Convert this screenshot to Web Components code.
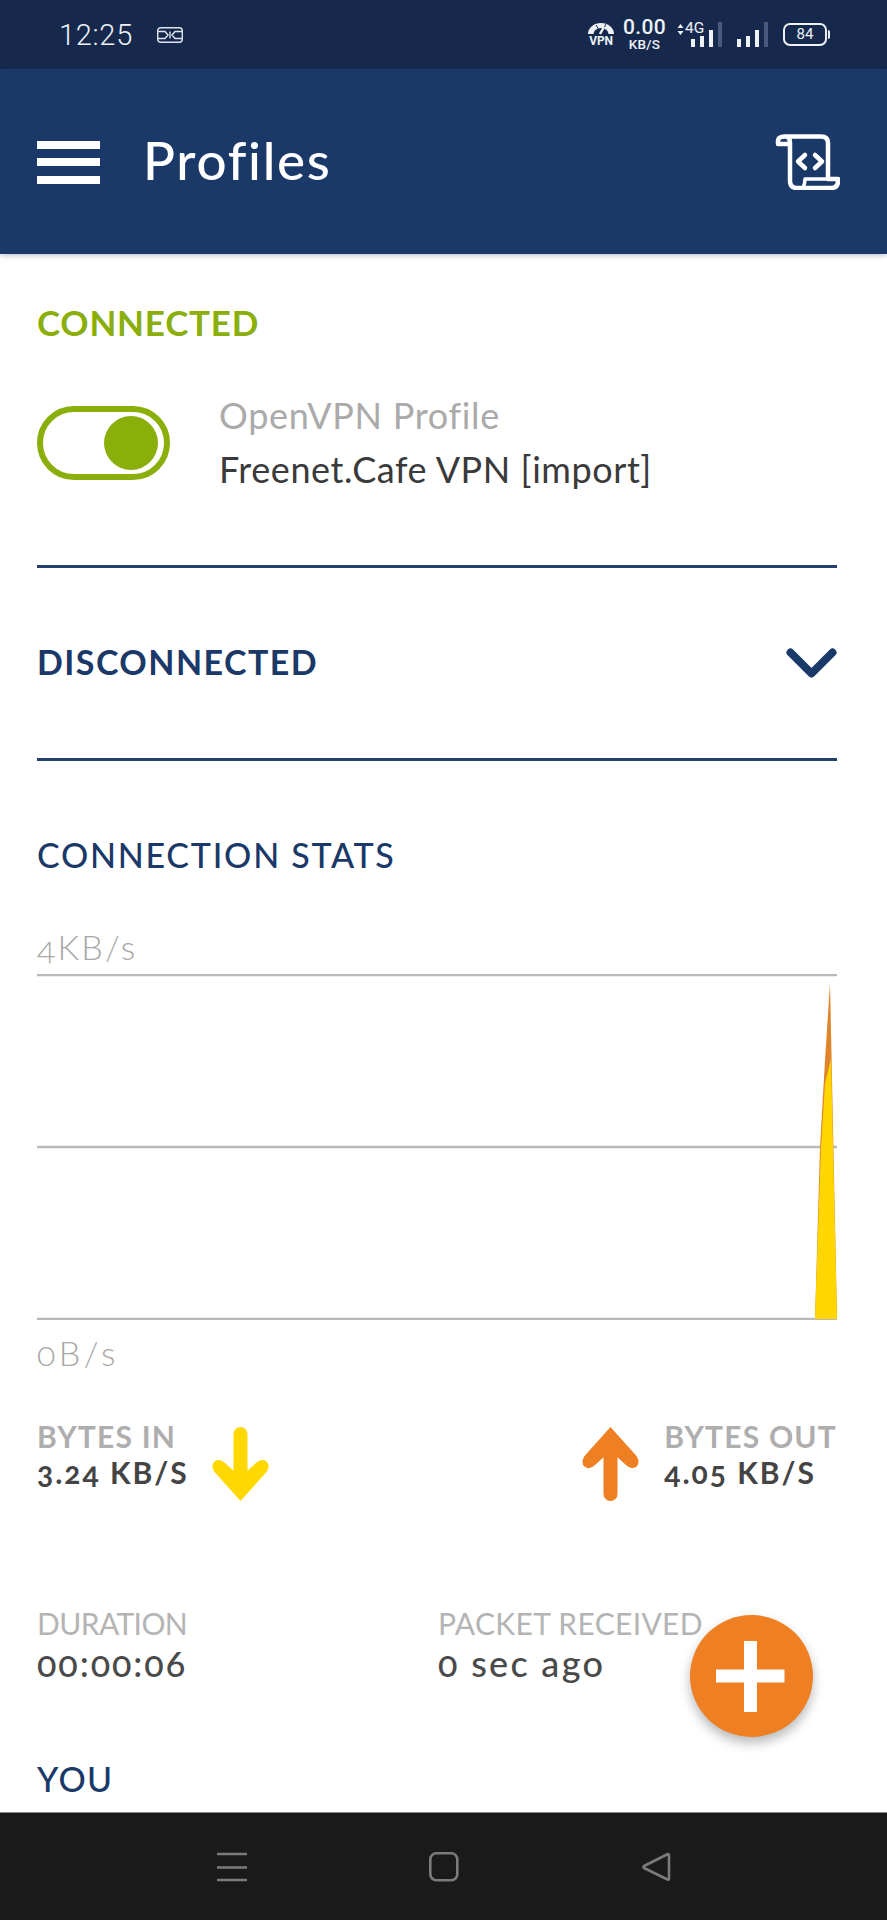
<!DOCTYPE html>
<html><head><meta charset="utf-8"><style>
html,body{margin:0;padding:0;background:#fff}
body{width:887px;height:1920px;overflow:hidden;font-family:"Lato","Liberation Sans",sans-serif}
</style></head><body>
<vpn-app>
  <status-bar slot="top"></status-bar>
  <app-bar slot="top">Profiles</app-bar>
  <sec-head tone="green" style="margin-top:48px;margin-bottom:1px;--ls:.75px;--fs:35px">CONNECTED</sec-head>
  <profile-row style="margin-top:47px"><span slot="a">OpenVPN Profile</span><span slot="b">Freenet.Cafe VPN [import]</span></profile-row>
  <h-rule style="margin-top:69px"></h-rule>
  <sec-head chevron style="margin-top:73px;margin-bottom:3px;--ls:1.45px">DISCONNECTED</sec-head>
  <h-rule style="margin-top:74px"></h-rule>
  <sec-head medium style="margin-top:73px;margin-bottom:2px;--ls:1.75px">CONNECTION STATS</sec-head>
  <stats-chart style="margin-top:53px"></stats-chart>
  <bytes-row style="margin-top:42px"></bytes-row>
  <info-row style="margin-top:94px"></info-row>
  <sec-head medium style="margin-top:73px;--ls:1.3px">YOU</sec-head>
  <add-fab slot="over"></add-fab>
  <nav-bar slot="bottom"></nav-bar>
</vpn-app>
<script>
function def(name,html){
  customElements.define(name,class extends HTMLElement{
    constructor(){super();this.attachShadow({mode:"open"}).innerHTML=html;}
  });
}
def("vpn-app",`<style>
:host{display:flex;flex-direction:column;width:887px;height:1920px;position:relative;overflow:hidden;background:#fff}
main{flex:1;min-height:0;overflow:hidden;display:flex;flex-direction:column;padding:0 50px 0 37px}
</style><slot name="top"></slot><main><slot></slot></main><slot name="over"></slot><slot name="bottom"></slot>`);

def("status-bar",`<style>
:host{display:flex;align-items:center;justify-content:space-between;height:69px;background:#16294d;color:#eef1f6;padding:0 57px 0 59px;box-sizing:border-box;flex:none;font-family:"Roboto","Lato",sans-serif}
.l{display:flex;align-items:center;gap:24px}
.t{font-size:29px;font-weight:300;letter-spacing:.7px;line-height:34px}
.r{display:flex;align-items:flex-start;height:69px;position:relative;width:242px}
svg{display:block;overflow:visible}
.speed{display:flex;flex-direction:column;align-items:center;width:43px;margin:19px 0 0 35px}
.speed b{font-size:21px;font-weight:500;line-height:17px;letter-spacing:.3px}
.speed i{font-style:normal;font-size:13.5px;font-weight:500;line-height:13px;margin-top:2px;letter-spacing:.2px}
.vpn{position:absolute;left:0;top:23px;width:26px;text-align:center}
.vpn i{display:block;font-style:normal;font-size:12px;font-weight:700;line-height:12px;margin-top:1px;letter-spacing:-.2px}
.g{font-size:15.5px;font-weight:400;position:absolute;left:97px;top:21px;line-height:15px}
.batt{position:absolute;left:195px;top:23px;width:44px;height:23px;box-sizing:border-box;border:2px solid #eef1f6;border-radius:7px;text-align:center;font-size:15px;line-height:19px;font-weight:400}
.nub{position:absolute;left:240px;top:30px;width:2px;height:9px;background:#eef1f6;border-radius:0 2px 2px 0}
</style>
<div class="l"><span class="t">12:25</span>
<svg width="26" height="16" viewBox="0 0 26 16" fill="none" stroke="#dfe4ec" stroke-width="1.4"><rect x=".7" y=".7" width="24.6" height="14.6" rx="3"/><path d="M1 4.500H8L11 8L8 11.500H1M25 4.500H18L15 8L18 11.500H25M13 4.500V11.500"/></svg></div>
<div class="r">
 <div class="vpn"><svg width="26" height="11" viewBox="0 0 26 11"><path d="M0 11A13 11 0 0 1 26 11H20.500A7.500 6 0 0 0 5.500 11Z" fill="#eef1f6"/><path d="M8 2L10.500 6M18 1L15.500 6" stroke="#16294d" stroke-width="1"/><path d="M12 11L16 4" stroke="#eef1f6" stroke-width="2.500"/></svg><i>VPN</i></div>
 <div class="speed"><b>0.00</b><i>KB/S</i></div>
 <svg style="position:absolute;left:89px;top:24px" width="7" height="11" viewBox="0 0 7 11" fill="#eef1f6"><path d="M3.500 0L6.500 4H.5ZM3.500 11L.5 7H6.500Z"/></svg>
 <span class="g">4G</span>
 <svg style="position:absolute;left:103px;top:22px" width="32" height="25" viewBox="0 0 32 25"><rect x="0" y="17" width="4" height="8" fill="#eef1f6"/><rect x="9" y="14" width="4" height="11" fill="#eef1f6"/><rect x="18" y="8" width="4" height="17" fill="#eef1f6"/><rect x="27" y="0" width="4" height="25" fill="#475a7e"/></svg>
 <svg style="position:absolute;left:149px;top:22px" width="32" height="25" viewBox="0 0 32 25"><rect x="0" y="17" width="4" height="8" fill="#eef1f6"/><rect x="9" y="14" width="4" height="11" fill="#eef1f6"/><rect x="18" y="8" width="4" height="17" fill="#eef1f6"/><rect x="27" y="0" width="4" height="25" fill="#475a7e"/></svg>
 <div class="batt">84</div><div class="nub"></div>
</div>`);

def("app-bar",`<style>
:host{display:flex;align-items:center;height:185px;background:#1a3868;color:#fff;padding:0 47px 0 37px;box-sizing:border-box;flex:none;box-shadow:0 2px 5px rgba(26,56,104,.25);position:relative;z-index:1}
.m{width:63px;height:43px;display:flex;flex-direction:column;justify-content:space-between;margin-top:1px}
.m i{display:block;height:8px;background:#fff}
.t{font-size:53px;font-weight:500;margin-left:43px;flex:1;line-height:60px;margin-top:-4px;letter-spacing:1.7px}
svg{display:block}
</style><div class="m"><i></i><i></i><i></i></div><div class="t"><slot></slot></div>
<svg width="65" height="56" viewBox="0 0 65 56" fill="none" stroke="#fff" stroke-width="4.500" stroke-linejoin="round" stroke-linecap="round"><path d="M10 2.500H46Q53 2.500 53 9V45H63V47Q63 54 56 54H22Q15 54 15 47V9Q15 2.500 10 2.500Q3 2.500 3 7V10H15"/><path d="M28 54Q30 50 30 45H53" stroke-width="3.500"/><path d="M30 21L23 27.500L30 34M40 21L47 27.500L40 34" stroke-width="4.500"/></svg>`);

def("sec-head",`<style>
:host{display:flex;align-items:center;justify-content:space-between;height:40px;flex:none;color:#1a3868;font-size:var(--fs,34px);font-weight:700;letter-spacing:var(--ls,0);white-space:nowrap}
:host([tone=green]){color:#8aae0a}
:host([medium]){font-weight:500}
svg{display:none}
:host([chevron]) svg{display:block;margin-top:3px}
</style><span><slot></slot></span><svg width="51" height="30" viewBox="0 0 51 30" fill="none" stroke="#1a3868" stroke-width="8" stroke-linecap="round" stroke-linejoin="round"><path d="M4.500 4.500L25.500 25.500L46.500 4.500"/></svg>`);

def("profile-row",`<style>
:host{display:flex;align-items:center;height:106px;flex:none}
.sw{width:133px;height:74px;box-sizing:border-box;border:6px solid #8aae0a;border-radius:37px;display:flex;align-items:center;justify-content:flex-end;padding-right:6px;flex:none}
.sw i{display:block;width:54px;height:54px;border-radius:50%;background:#8aae0a}
.tx{margin-left:49px;font-size:36px;line-height:54px;white-space:nowrap;margin-top:-2px}
.a{color:#aaa;letter-spacing:.7px}.b{color:#3a3a3a;letter-spacing:.56px}
</style><div class="sw"><i></i></div><div class="tx"><div class="a"><slot name="a"></slot></div><div class="b"><slot name="b"></slot></div></div>`);

def("h-rule",`<style>:host{display:block;height:3px;background:#24406c;flex:none}</style>`);

def("stats-chart",`<style>
:host{display:flex;flex-direction:column;flex:none;color:#a8a8a8;font-size:34px;font-weight:300;font-variant-numeric:oldstyle-nums}
.l{height:40px;line-height:40px;letter-spacing:2.2px;margin-top:-2px;margin-bottom:2px}
.z{letter-spacing:3.5px}
svg{display:block;margin:5px 0 15px}
</style><div class="l">4KB/s</div>
<svg width="800" height="346" viewBox="0 0 800 346">
<path d="M0 1H800M0 173H800M0 345H800" stroke="#b9b9b9" stroke-width="2.500" fill="none"/>
<path d="M778 345L783 173L788 86L793 9L800 345Z" fill="#e0862a"/>
<path d="M778 345L784 173L788 110L794 85L800 345Z" fill="#ffd600"/>
</svg>
<div class="l z">0B/s</div>`);

def("bytes-item",`<style>
:host{display:block;font-size:30px}
.a{color:#aeaeae;font-weight:700;height:38px;line-height:38px;white-space:nowrap;letter-spacing:1.2px}
.b{color:#444;font-weight:700;height:38px;line-height:38px;white-space:nowrap;letter-spacing:2px;margin-top:-2px;font-variant-numeric:oldstyle-nums}
</style><div class="a"><slot name="a"></slot></div><div class="b"><slot name="b"></slot></div>`);

def("bytes-row",`<style>
:host{display:flex;height:92px;flex:none}
svg{display:block;margin-top:10px;overflow:visible}
.sp{flex:1}
</style>
<bytes-item><span slot="a">BYTES IN</span><span slot="b">3.24 KB/S</span></bytes-item>
<svg style="margin-left:22px" width="59" height="74" viewBox="0 0 59 74"><path d="M29.500 7V50" stroke="#ffd800" stroke-width="14" stroke-linecap="round" fill="none"/><path d="M29.500 74L3.500 45Q-1 38 4 34Q9 31 14 36L29.500 50L45 36Q50 31 55 34Q60 38 55.500 45Z" fill="#ffd800"/></svg>
<div class="sp"></div>
<svg style="margin-right:24px" width="59" height="74" viewBox="0 0 59 74"><path d="M29.500 67V24" stroke="#ee7f22" stroke-width="14" stroke-linecap="round" fill="none"/><path d="M29.500 0L3.500 29Q-1 36 4 40Q9 43 14 38L29.500 24L45 38Q50 43 55 40Q60 36 55.500 29Z" fill="#ee7f22"/></svg>
<bytes-item><span slot="a">BYTES OUT</span><span slot="b">4.05 KB/S</span></bytes-item>`);

def("info-item",`<style>
:host{display:block}
.a{color:#b4b4b4;font-size:30px;height:40px;line-height:40px;white-space:nowrap;letter-spacing:var(--la,0)}
.b{color:#4a4a4a;font-size:36px;font-weight:500;height:40px;line-height:40px;margin-top:0;white-space:nowrap;letter-spacing:var(--lb,0);font-variant-numeric:oldstyle-nums}
</style><div class="a"><slot name="a"></slot></div><div class="b"><slot name="b"></slot></div>`);

def("info-row",`<style>
:host{display:grid;grid-template-columns:401px 1fr;height:82px;flex:none}
</style>
<info-item style="--la:-.6px;--lb:1.9px"><span slot="a">DURATION</span><span slot="b">00:00:06</span></info-item>
<info-item style="--la:.33px;--lb:2.3px"><span slot="a">PACKET RECEIVED</span><span slot="b">0 sec ago</span></info-item>`);

def("add-fab",`<style>
:host{display:block;position:absolute;left:690px;top:1615px;width:123px;height:122px;border-radius:50%;background:#ee7f22;box-shadow:0 6px 12px rgba(0,0,0,.28)}
svg{display:block}
</style><svg width="123" height="122" viewBox="0 0 123 122"><path d="M26 61H94.500M60.500 26V97" stroke="#fff" stroke-width="13" fill="none"/></svg>`);

def("nav-bar",`<style>
:host{display:flex;height:108px;background:#1a1a1a;flex:none;box-sizing:border-box;border-top:1px solid #8a8a8a;padding:0 0 0 217px;align-items:flex-start}
svg{display:block;margin-top:39px}
</style>
<svg width="30" height="30" viewBox="0 0 30 30" fill="none" stroke="#7b7b7b" stroke-width="2.600"><path d="M0 2H30M0 15.500H30M0 28H30"/></svg>
<svg style="margin-left:182px" width="30" height="30" viewBox="0 0 30 30" fill="none" stroke="#7b7b7b" stroke-width="2.600"><rect x="1.300" y="1.300" width="27" height="27" rx="6"/></svg>
<svg style="margin-left:182px" width="30" height="30" viewBox="0 0 30 30" fill="none" stroke="#7b7b7b" stroke-width="2.600" stroke-linejoin="round"><path d="M27 2Q28 2 28 3.500V26.500Q28 28 26.500 27.500L3 16Q2 15 3 14Z"/></svg>`);
</script></body></html>
